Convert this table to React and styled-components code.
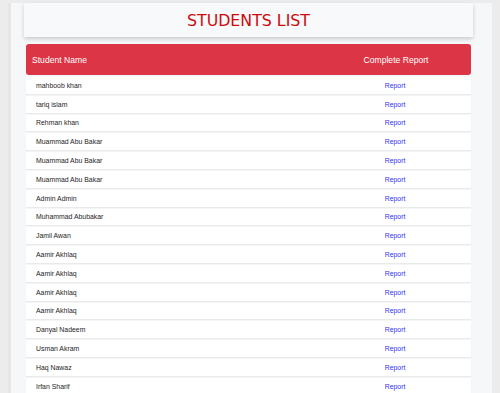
import styled, { createGlobalStyle } from 'styled-components';

const GlobalStyle = createGlobalStyle`
  html, body {
    margin: 0;
    padding: 0;
    background: #ececec;
    font-family: "Liberation Sans", Arial, sans-serif;
  }
`;

const Page = styled.div`
  margin: 0 8px;
  min-height: 393px;
  background: #f6f7f9;
  padding: 0 19px 0 13px;
  border-left: 3px solid #e6e6e6;
`;

const TitleCard = styled.div`
  margin-top: 3px;
  height: 34px;
  background: #f8f9fa;
  box-shadow: 0 2px 4px rgba(0, 0, 0, 0.18);
  display: flex;
  align-items: center;
  justify-content: center;
`;

const Title = styled.h1`
  margin: 0;
  font-family: "DejaVu Sans", Verdana, sans-serif;
  font-weight: 400;
  font-size: 15.8px;
  color: #cc0a0a;
`;

const Table = styled.div`
  margin: 7px 2px 0 2px;
  display: flex;
  flex-direction: column;
  gap: 2px;
`;

const HeaderRow = styled.div`
  height: 31px;
  background: #dc3545;
  border-radius: 3px;
  display: grid;
  grid-template-columns: 1fr 150px;
  align-items: center;
  color: #fff;
  font-size: 8.6px;
`;

const Row = styled.div`
  height: 16.8px;
  background: #fff;
  display: grid;
  grid-template-columns: 1fr 152px;
  align-items: center;
  font-size: 6.9px;
  color: #1e1e1e;
  box-shadow: 0 1px 1px rgba(0, 0, 0, 0.05);
`;

const Cell = styled.div`
  padding-left: ${(p) => p.$pad ?? 10}px;
  text-align: ${(p) => (p.$center ? 'center' : 'left')};
`;

const ReportLink = styled.a`
  color: #3434f0;
  text-decoration: none;
`;

const students = [
  'mahboob khan',
  'tariq islam',
  'Rehman khan',
  'Muammad Abu Bakar',
  'Muammad Abu Bakar',
  'Muammad Abu Bakar',
  'Admin Admin',
  'Muhammad Abubakar',
  'Jamil Awan',
  'Aamir Akhlaq',
  'Aamir Akhlaq',
  'Aamir Akhlaq',
  'Aamir Akhlaq',
  'Danyal Nadeem',
  'Usman Akram',
  'Haq Nawaz',
  'Irfan Sharif',
];

export default function App() {
  return (
    <>
      <GlobalStyle />
      <Page>
        <TitleCard>
          <Title>STUDENTS LIST</Title>
        </TitleCard>
        <Table>
          <HeaderRow>
            <Cell $pad={6}>Student Name</Cell>
            <Cell $center $pad={0}>Complete Report</Cell>
          </HeaderRow>
          {students.map((name, i) => (
            <Row key={i}>
              <Cell>{name}</Cell>
              <Cell $center $pad={0}>
                <ReportLink href="#">Report</ReportLink>
              </Cell>
            </Row>
          ))}
        </Table>
      </Page>
    </>
  );
}
